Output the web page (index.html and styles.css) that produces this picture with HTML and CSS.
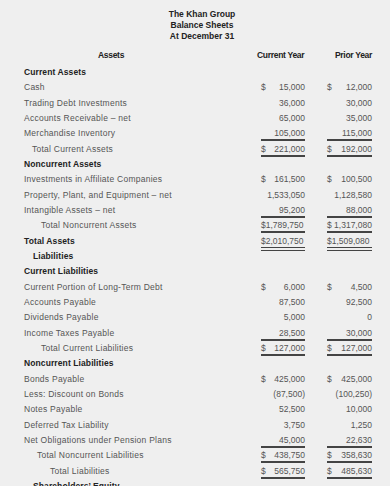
FILE: index.html
```html
<!DOCTYPE html>
<html>
<head>
<meta charset="utf-8">
<link rel="stylesheet" href="styles.css">
</head>
<body>
<div class="sheet">
  <div class="title">
    <div>The Khan Group</div>
    <div>Balance Sheets</div>
    <div>At December 31</div>
  </div>
  <div class="head">
    <div class="h-label">Assets</div>
    <div class="h-cur">Current Year</div>
    <div class="h-pri">Prior Year</div>
  </div>
  <div class="rows">
    <div class="row sec"><div class="lbl">Current Assets</div></div>
    <div class="row"><div class="lbl">Cash</div><div class="v"><span>$</span><span>15,000</span></div><div class="v"><span>$</span><span>12,000</span></div></div>
    <div class="row"><div class="lbl">Trading Debt Investments</div><div class="v"><span></span><span>36,000</span></div><div class="v"><span></span><span>30,000</span></div></div>
    <div class="row"><div class="lbl">Accounts Receivable – net</div><div class="v"><span></span><span>65,000</span></div><div class="v"><span></span><span>35,000</span></div></div>
    <div class="row"><div class="lbl">Merchandise Inventory</div><div class="v u"><span></span><span>105,000</span></div><div class="v u"><span></span><span>115,000</span></div></div>
    <div class="row"><div class="lbl i1">Total Current Assets</div><div class="v u"><span>$</span><span>221,000</span></div><div class="v u"><span>$</span><span>192,000</span></div></div>
    <div class="row sec"><div class="lbl">Noncurrent Assets</div></div>
    <div class="row"><div class="lbl">Investments in Affiliate Companies</div><div class="v"><span>$</span><span>161,500</span></div><div class="v"><span>$</span><span>100,500</span></div></div>
    <div class="row"><div class="lbl">Property, Plant, and Equipment – net</div><div class="v"><span></span><span>1,533,050</span></div><div class="v"><span></span><span>1,128,580</span></div></div>
    <div class="row"><div class="lbl">Intangible Assets – net</div><div class="v u"><span></span><span>95,200</span></div><div class="v u"><span></span><span>88,000</span></div></div>
    <div class="row"><div class="lbl i3">Total Noncurrent Assets</div><div class="v u"><span>$1,789,750</span><span></span></div><div class="v u"><span>$ 1,317,080</span><span></span></div></div>
    <div class="row sec"><div class="lbl">Total Assets</div><div class="v uu"><span>$2,010,750</span><span></span></div><div class="v uu"><span>$1,509,080</span><span></span></div></div>
    <div class="row sec"><div class="lbl i2">Liabilities</div></div>
    <div class="row sec"><div class="lbl">Current Liabilities</div></div>
    <div class="row"><div class="lbl">Current Portion of Long-Term Debt</div><div class="v"><span>$</span><span>6,000</span></div><div class="v"><span>$</span><span>4,500</span></div></div>
    <div class="row"><div class="lbl">Accounts Payable</div><div class="v"><span></span><span>87,500</span></div><div class="v"><span></span><span>92,500</span></div></div>
    <div class="row"><div class="lbl">Dividends Payable</div><div class="v"><span></span><span>5,000</span></div><div class="v"><span></span><span>0</span></div></div>
    <div class="row"><div class="lbl">Income Taxes Payable</div><div class="v u"><span></span><span>28,500</span></div><div class="v u"><span></span><span>30,000</span></div></div>
    <div class="row"><div class="lbl i3">Total Current Liabilities</div><div class="v u"><span>$</span><span>127,000</span></div><div class="v u"><span>$</span><span>127,000</span></div></div>
    <div class="row sec"><div class="lbl">Noncurrent Liabilities</div></div>
    <div class="row"><div class="lbl">Bonds Payable</div><div class="v"><span>$</span><span>425,000</span></div><div class="v"><span>$</span><span>425,000</span></div></div>
    <div class="row"><div class="lbl">Less: Discount on Bonds</div><div class="v neg"><span></span><span>(87,500)</span></div><div class="v neg"><span></span><span>(100,250)</span></div></div>
    <div class="row"><div class="lbl">Notes Payable</div><div class="v"><span></span><span>52,500</span></div><div class="v"><span></span><span>10,000</span></div></div>
    <div class="row"><div class="lbl">Deferred Tax Liability</div><div class="v"><span></span><span>3,750</span></div><div class="v"><span></span><span>1,250</span></div></div>
    <div class="row"><div class="lbl">Net Obligations under Pension Plans</div><div class="v u"><span></span><span>45,000</span></div><div class="v u"><span></span><span>22,630</span></div></div>
    <div class="row"><div class="lbl i4">Total Noncurrent Liabilities</div><div class="v u"><span>$</span><span>438,750</span></div><div class="v u"><span>$</span><span>358,630</span></div></div>
    <div class="row"><div class="lbl i5">Total Liabilities</div><div class="v u"><span>$</span><span>565,750</span></div><div class="v u"><span>$</span><span>485,630</span></div></div>
    <div class="row sec"><div class="lbl i2">Shareholders’ Equity</div></div>
  </div>
</div>
</body>
</html>
```
FILE: styles.css
```css
html, body {
  margin: 0;
  padding: 0;
  background: #efefef;
}
body {
  width: 390px;
  height: 486px;
  overflow: hidden;
  font-family: "Liberation Sans", Arial, sans-serif;
  font-size: 8.5px;
  color: #555;
}
.sheet {
  padding-top: 9px;
}
.title {
  display: flex;
  flex-direction: column;
  align-items: center;
  font-weight: bold;
  color: #222;
  line-height: 11px;
  padding-left: 14px;
}
.head {
  display: grid;
  grid-template-columns: 257px 50px 65px;
  margin-top: 7px;
  height: 12px;
  line-height: 12px;
  font-weight: bold;
  color: #222;
  letter-spacing: -0.3px;
}
.h-label {
  padding-left: 98px;
}
.h-cur {
  text-align: left;
}
.h-pri {
  text-align: right;
}
.rows {
  margin-top: 4px;
}
.row {
  display: grid;
  grid-template-columns: 261px 44px 22px 45px;
  height: 15.33px;
  align-items: start;
}
.row .v:last-child {
  grid-column: 4;
}
.lbl {
  padding-left: 24px;
  line-height: 15px;
  white-space: nowrap;
  letter-spacing: 0.25px;
}
.sec .lbl {
  font-weight: bold;
  color: #222;
  letter-spacing: 0.1px;
}
.i1 { padding-left: 32px; }
.i2 { padding-left: 33px; }
.i3 { padding-left: 41px; }
.i4 { padding-left: 37px; }
.i5 { padding-left: 50px; }
.v {
  display: flex;
  justify-content: space-between;
  line-height: 13px;
  height: 13px;
  margin-top: 1px;
  color: #555;
  white-space: nowrap;
}
.u {
  border-bottom: 2px solid #444;
  height: 12px;
}
.uu {
  border-bottom: 4px double #444;
  height: 12px;
}
```
